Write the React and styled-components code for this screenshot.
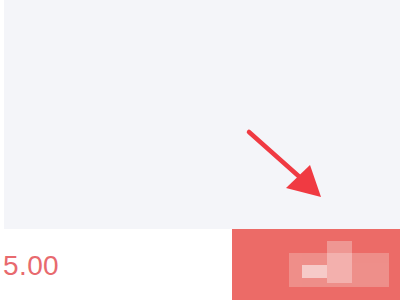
import React from "react";
import styled, { createGlobalStyle } from "styled-components";

const GlobalStyle = createGlobalStyle`
  html, body {
    margin: 0;
    padding: 0;
    background: #ffffff;
    font-family: "Liberation Sans", Arial, sans-serif;
  }
`;

const Page = styled.div`
  width: 400px;
  height: 300px;
  display: flex;
  flex-direction: column;
  overflow: hidden;
  background: #ffffff;
`;

const Content = styled.div`
  position: relative;
  height: 229px;
  margin-left: 4px;
  background: #f4f5f9;
`;

const Arrow = styled.svg`
  position: absolute;
  left: 237px;
  top: 124px;
`;

const Footer = styled.div`
  flex: 1;
  display: flex;
  align-items: stretch;
`;

const Price = styled.div`
  flex: 1;
  display: flex;
  align-items: center;
  padding-left: 3px;
  padding-top: 2px;
  color: #e86a6e;
  font-size: 28px;
  letter-spacing: 0.4px;
`;

const Button = styled.div`
  width: 168px;
  background: #ec6b67;
  display: flex;
  align-items: center;
  justify-content: center;
`;

const Mosaic = styled.svg`
  display: block;
  margin-left: 46px;
  margin-top: 1px;
`;

export default function App() {
  return (
    <>
      <GlobalStyle />
      <Page>
        <Content>
          <Arrow width="90" height="80" viewBox="0 0 90 80">
            <line x1="8" y1="8" x2="62" y2="56" stroke="#f03a42" strokeWidth="4.5" strokeLinecap="round" />
            <polygon points="80,73 45,64 69,41" fill="#f03a42" />
          </Arrow>
        </Content>
        <Footer>
          <Price>5.00</Price>
          <Button>
            <Mosaic width="100" height="48" viewBox="0 0 100 48">
              <rect x="0" y="12" width="100" height="34" fill="#f09c99" opacity="0.7" />
              <rect x="38" y="0" width="25" height="12" fill="#f0a29f" opacity="0.8" />
              <rect x="38" y="12" width="25" height="30" fill="#f3b0ad" />
              <rect x="13" y="24" width="25" height="13" fill="#f6cac8" />
              <rect x="63" y="22" width="37" height="22" fill="#ee8f8b" opacity="0.6" />
              <rect x="0" y="12" width="13" height="34" fill="#ef8e8a" opacity="0.5" />
            </Mosaic>
          </Button>
        </Footer>
      </Page>
    </>
  );
}
